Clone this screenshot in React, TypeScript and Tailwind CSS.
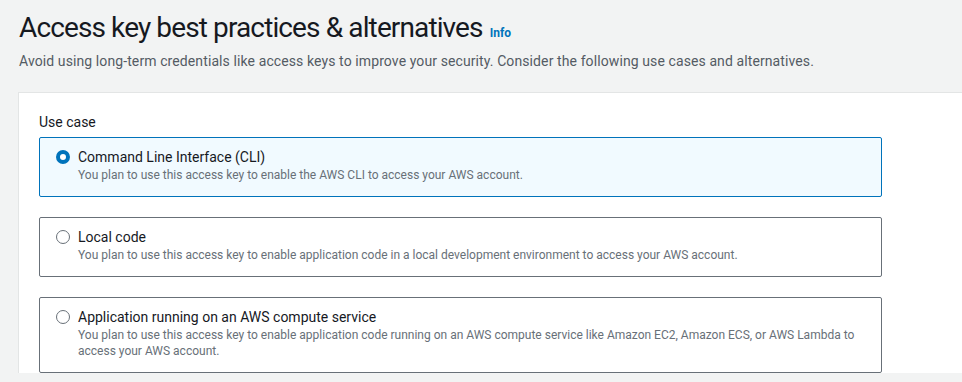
const OPTIONS = [
  {
    title: "Command Line Interface (CLI)",
    desc: "You plan to use this access key to enable the AWS CLI to access your AWS account.",
    selected: true,
  },
  {
    title: "Local code",
    desc: "You plan to use this access key to enable application code in a local development environment to access your AWS account.",
    selected: false,
  },
  {
    title: "Application running on an AWS compute service",
    desc: "You plan to use this access key to enable application code running on an AWS compute service like Amazon EC2, Amazon ECS, or AWS Lambda to access your AWS account.",
    selected: false,
  },
];

function Radio({ checked }: { checked: boolean }) {
  if (checked) {
    return (
      <span className="mt-[3px] h-[14px] w-[14px] shrink-0 rounded-full border-[4px] border-[#0073bb] bg-white" />
    );
  }
  return (
    <span className="mt-[3px] h-[14px] w-[14px] shrink-0 rounded-full border-[1.5px] border-[#687078] bg-white" />
  );
}

export default function App() {
  return (
    <div className="h-[382px] w-[962px] overflow-hidden bg-[#f2f3f3] font-['Roboto',sans-serif] text-[#16191f]">
      <div className="px-[19px] pt-[8px]">
        <div className="flex items-baseline gap-[7px]">
          <h1 className="text-[28px] leading-[40px] font-normal tracking-[-0.88px]">
            Access key best practices &amp; alternatives
          </h1>
          <span className="text-[12px] font-bold text-[#0073bb]">Info</span>
        </div>
        <p className="mt-[3px] text-[14px] leading-[20px] tracking-[0.1px] text-[#545b64]">
          Avoid using long-term credentials like access keys to improve your security. Consider the following use cases and alternatives.
        </p>
      </div>

      <div className="ml-[18px] mt-[21px] border-t border-l border-[#e3e5e5] bg-white pl-[20px] pr-[80px] pt-[19px]">
        <div className="text-[14px] leading-[20px]">Use case</div>
        <div className="mt-[5px] flex w-[843px] flex-col gap-[20px]">
          {OPTIONS.map((o) => (
            <div
              key={o.title}
              className={`flex gap-[8px] rounded-[2px] border px-[16px] pt-[9px] pb-[13px] ${
                o.selected ? "border-[#0073bb] bg-[#f1faff]" : "border-[#687078] bg-white"
              }`}
            >
              <Radio checked={o.selected} />
              <div className="min-w-0">
                <div className="text-[14px] leading-[20px]">{o.title}</div>
                <div className="text-[12px] leading-[16px] text-[#687078]">{o.desc}</div>
              </div>
            </div>
          ))}
        </div>
      </div>
    </div>
  );
}
